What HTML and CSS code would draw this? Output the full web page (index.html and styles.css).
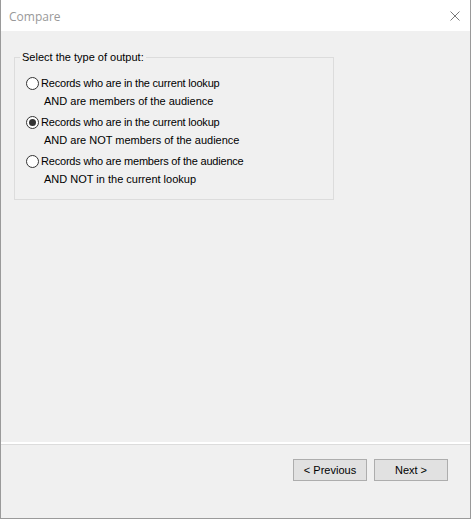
FILE: index.html
```html
<!DOCTYPE html>
<html lang="en">
<head>
    <meta charset="UTF-8">
    <meta name="viewport" content="width=device-width, initial-scale=1.0">
    <title>Compare</title>
    <link rel="stylesheet" href="styles.css">
</head>
<body>
    <div class="window">
        <div class="titlebar">
            <span class="title">Compare</span>
            <svg class="close" width="10" height="10" viewBox="0 0 10 10">
                <path d="M0.5 0.5 L9.5 9.5 M9.5 0.5 L0.5 9.5" stroke="#7a7a7a" stroke-width="1" fill="none"/>
            </svg>
        </div>
        <div class="content">
            <fieldset class="group">
                <legend>Select the type of output:</legend>
                <div class="options">
                    <label class="option">
                        <span class="line main"><input type="radio" name="output"> Records who are in the current lookup</span>
                        <span class="line sub">AND are members of the audience</span>
                    </label>
                    <label class="option">
                        <span class="line main"><input type="radio" name="output" checked> Records who are in the current lookup</span>
                        <span class="line sub">AND are NOT members of the audience</span>
                    </label>
                    <label class="option">
                        <span class="line main"><input type="radio" name="output"> Records who are members of the audience</span>
                        <span class="line sub">AND NOT in the current lookup</span>
                    </label>
                </div>
            </fieldset>
        </div>
        <div class="separator"></div>
        <div class="footer">
            <button type="button">&lt; Previous</button>
            <button type="button">Next &gt;</button>
        </div>
    </div>
</body>
</html>
```

FILE: styles.css
```css
body {
    margin: 0;
    font-family: "Liberation Sans", Arial, sans-serif;
    font-size: 11px;
    color: #000000;
    background-color: #f0f0f0;
}
.window {
    width: 471px;
    height: 519px;
    box-sizing: border-box;
    display: flex;
    flex-direction: column;
    border: 1px solid #9a9a9a;
    border-top: none;
    background-color: #f0f0f0;
}
.titlebar {
    height: 31px;
    flex-shrink: 0;
    display: flex;
    align-items: center;
    justify-content: space-between;
    padding: 0 10px 0 8px;
    background-color: #ffffff;
}
.title {
    font-family: "Open Sans", sans-serif;
    font-size: 12px;
    color: #999999;
    margin-top: 1px;
}
.close {
    display: block;
}
.content {
    flex: 1;
    padding: 19px 0 0 13px;
}
.group {
    width: 320px;
    box-sizing: border-box;
    margin: 0;
    padding: 0;
    border: 1px solid #dcdcdc;
}
.group legend {
    margin-left: 5px;
    padding: 0 2px;
    line-height: 14px;
}
.options {
    display: flex;
    flex-direction: column;
    gap: 3px;
    padding: 10px 0 11px 11px;
}
.option {
    display: flex;
    flex-direction: column;
}
.line {
    display: flex;
    align-items: center;
    height: 18px;
    white-space: nowrap;
}
.line.main {
    letter-spacing: -0.2px;
}
.line.sub {
    padding-left: 18px;
}
input[type="radio"] {
    appearance: none;
    width: 13px;
    height: 13px;
    margin: 0 2px 0 0;
    border: 1px solid #333333;
    border-radius: 50%;
    background-color: #ffffff;
    box-sizing: border-box;
    display: flex;
    align-items: center;
    justify-content: center;
}
input[type="radio"]:checked::after {
    content: "";
    width: 7px;
    height: 7px;
    border-radius: 50%;
    background-color: #333333;
}
.separator {
    height: 2px;
    background-color: #ffffff;
    border-bottom: 1px solid #dcdcdc;
}
.footer {
    height: 73px;
    display: flex;
    justify-content: flex-end;
    align-items: flex-start;
    gap: 7px;
    padding: 14px 22px 0 0;
    box-sizing: border-box;
}
button {
    width: 74px;
    height: 22px;
    padding: 0;
    font-family: "Liberation Sans", Arial, sans-serif;
    font-size: 11px;
    color: #000000;
    background-color: #e1e1e1;
    border: 1px solid #adadad;
}
```
